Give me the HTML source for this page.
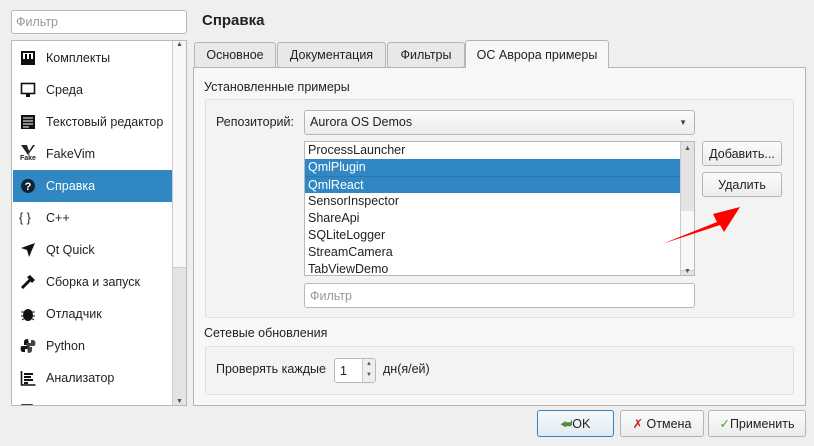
<!DOCTYPE html>
<html><head><meta charset="utf-8"><style>
*{box-sizing:border-box}
body{margin:0;width:814px;height:446px;background:#efefef;font-family:"Liberation Sans","DejaVu Sans",sans-serif;font-size:12.5px;color:#222;position:relative;overflow:hidden}
.a{position:absolute}
.inp{background:#fff;border:1px solid #b9b9b9;border-radius:3px}
.btn{background:linear-gradient(#fbfbfb,#ececec);border:1px solid #b5b5b5;border-radius:3px;text-align:center}
.item{position:absolute;left:1px;width:161px;height:32px;line-height:32px;padding-left:33px}
.row{height:17px;line-height:17px;padding-left:3px}
.sel{background:#3087c4;color:#fff}
</style></head><body>
<div class="a inp" style="left:11px;top:10px;width:176px;height:24px;padding:4px 4px;color:#999">Фильтр</div>
<div class="a" style="left:11px;top:40px;width:176px;height:366px;background:#fff;border:1px solid #b9b9b9;overflow:hidden">
 <div class="item" style="top:1px"><svg class="a" style="left:7px;top:8px" width="16" height="16"><rect x="1" y="1" width="14" height="14" fill="#111"/><rect x="3" y="3" width="10" height="6" fill="#fff"/><rect x="5" y="4" width="2" height="5"/><rect x="9" y="4" width="2" height="5"/></svg>Комплекты</div>
 <div class="item" style="top:33px"><svg class="a" style="left:7px;top:8px" width="16" height="16"><rect x="1.5" y="1.5" width="13" height="10" fill="none" stroke="#111" stroke-width="1.6"/><rect x="6" y="12" width="4" height="3" fill="#111"/></svg>Среда</div>
 <div class="item" style="top:65px"><svg class="a" style="left:7px;top:8px" width="16" height="16"><rect x="1" y="1" width="14" height="14" fill="#111"/><path d="M3 4h10M3 7h10M3 10h10M3 13h6" stroke="#fff"/></svg>Текстовый редактор</div>
 <div class="item" style="top:97px"><span class="a" style="left:7px;top:5px;font-size:7px;font-weight:bold">Fake</span><svg class="a" style="left:7px;top:6px" width="16" height="12"><path d="M1 1h6l2 6 4-6h2l-7 10z" fill="#222"/></svg>FakeVim</div>
 <div class="item sel" style="top:129px"><svg class="a" style="left:7px;top:8px" width="16" height="16"><circle cx="8" cy="8" r="7" fill="#123"/><text x="8" y="12" font-size="11" font-weight="bold" fill="#fff" text-anchor="middle" font-family="Liberation Sans">?</text></svg>Справка</div>
 <div class="item" style="top:161px"><span class="a" style="left:6px;top:0">{ }</span>C++</div>
 <div class="item" style="top:193px"><svg class="a" style="left:7px;top:8px" width="16" height="16"><path d="M15 1L1 6l6 2 2 7z" fill="#111"/></svg>Qt Quick</div>
 <div class="item" style="top:225px"><svg class="a" style="left:7px;top:8px" width="16" height="16"><path d="M2 14l8-8" stroke="#111" stroke-width="3"/><path d="M7 3l3-2 5 5-3 3z" fill="#111"/></svg>Сборка и запуск</div>
 <div class="item" style="top:257px"><svg class="a" style="left:7px;top:8px" width="16" height="16"><ellipse cx="8" cy="9" rx="5" ry="6" fill="#111"/><path d="M1 6h14M1 10h14M2 14l3-2M14 14l-3-2" stroke="#111"/></svg>Отладчик</div>
 <div class="item" style="top:289px"><svg class="a" style="left:7px;top:8px" width="16" height="16"><path d="M8 1C4 1 4 3 4 5v2h5v1H2c-2 0-2 6 1 6h2v-3h5" fill="#111"/><path d="M8 15c4 0 4-2 4-4V9H7V8h7c2 0 2-6-1-6h-2v3H6" fill="#444"/></svg>Python</div>
 <div class="item" style="top:321px"><svg class="a" style="left:7px;top:8px" width="16" height="16"><path d="M1.5 1v14h14" stroke="#111" stroke-width="1.6" fill="none"/><path d="M4 4h9M4 7h7M4 10h9M4 13h4" stroke="#111" stroke-width="2"/></svg>Анализатор</div>
 <div class="item" style="top:353px"><svg class="a" style="left:7px;top:8px" width="16" height="16"><rect x="2" y="3" width="10" height="10" fill="none" stroke="#111" stroke-width="1.6"/></svg></div>
 <div class="a" style="right:0;top:0;width:14px;height:364px;background:#e3e3e3;border-left:1px solid #ccc">
  <div style="height:227px;background:#f8f8f8;border-bottom:1px solid #ccc;font-size:7px;text-align:center;color:#555">▲</div>
  <div class="a" style="bottom:0;width:13px;text-align:center;font-size:7px;color:#555">▼</div>
 </div>
</div>

<div class="a" style="left:202px;top:12px;font-size:15px;font-weight:bold">Справка</div>
<div class="a" style="left:193px;top:67px;width:613px;height:339px;background:#f7f7f7;border:1px solid #b5b5b5"></div>
<div class="a btn" style="left:194px;top:42px;width:82px;height:26px;line-height:25px;background:#e8e8e8">Основное</div>
<div class="a btn" style="left:277px;top:42px;width:109px;height:26px;line-height:25px;background:#e8e8e8">Документация</div>
<div class="a btn" style="left:387px;top:42px;width:78px;height:26px;line-height:25px;background:#e8e8e8">Фильтры</div>
<div class="a" style="left:465px;top:40px;width:144px;height:28px;line-height:28px;background:#f7f7f7;border:1px solid #b5b5b5;border-bottom:none;border-radius:3px 3px 0 0;text-align:center">ОС Аврора примеры</div>

<div class="a" style="left:204px;top:80px">Установленные примеры</div>
<div class="a" style="left:205px;top:99px;width:589px;height:219px;background:#f3f3f3;border:1px solid #e0e0e0;border-radius:3px"></div>
<div class="a" style="left:216px;top:115px">Репозиторий:</div>
<div class="a btn" style="left:304px;top:110px;width:391px;height:25px;line-height:23px;text-align:left;padding-left:5px">Aurora OS Demos<span class="a" style="right:7px;top:0;font-size:8px;color:#444">▼</span></div>
<div class="a" style="left:304px;top:141px;width:391px;height:135px;background:#fff;border:1px solid #b9b9b9">
 <div class="row">ProcessLauncher</div>
 <div class="row sel" style="width:376px">QmlPlugin</div>
 <div class="row sel" style="width:376px;border-top:1px solid #2a78b0">QmlReact</div>
 <div class="row">SensorInspector</div>
 <div class="row">ShareApi</div>
 <div class="row">SQLiteLogger</div>
 <div class="row">StreamCamera</div>
 <div class="row">TabViewDemo</div>
 <div class="a" style="right:0;top:0;width:14px;height:133px;background:#e3e3e3;border-left:1px solid #ccc">
  <div style="height:17px;font-size:7px;text-align:center;color:#555;line-height:14px">▲</div>
  <div style="height:60px;background:#f8f8f8;border-bottom:1px solid #ccc;margin-top:52px"></div>
  <div class="a" style="bottom:0;width:13px;text-align:center;font-size:7px;color:#555">▼</div>
 </div>
</div>
<div class="a btn" style="left:702px;top:141px;width:80px;height:25px;line-height:24px">Добавить...</div>
<div class="a btn" style="left:702px;top:172px;width:80px;height:25px;line-height:24px">Удалить</div>
<svg class="a" style="left:655px;top:200px" width="90" height="50"><path d="M7 44L62 22l-4-8 27-7-16 25-4-7z" fill="#f00"/></svg>
<div class="a inp" style="left:304px;top:283px;width:391px;height:25px;padding:5px 5px;color:#999">Фильтр</div>

<div class="a" style="left:204px;top:326px">Сетевые обновления</div>
<div class="a" style="left:205px;top:346px;width:589px;height:49px;background:#f3f3f3;border:1px solid #e0e0e0;border-radius:3px"></div>
<div class="a" style="left:216px;top:362px">Проверять каждые</div>
<div class="a inp" style="left:334px;top:358px;width:42px;height:25px;padding:5px 5px">1<span class="a" style="right:0;top:0;width:13px;height:23px;border-left:1px solid #ccc;background:#eee;font-size:6px;line-height:11px;text-align:center;color:#555">▲<br>▼</span></div>
<div class="a" style="left:383px;top:362px">дн(я/ей)</div>

<div class="a btn" style="left:537px;top:410px;width:77px;height:27px;line-height:26px;border-color:#3d7fb4;background:linear-gradient(#f4f8fb,#e2ebf2)"><span style="color:#5a8a3a;font-weight:bold">⮨</span>OK</div>
<div class="a btn" style="left:620px;top:410px;width:84px;height:27px;line-height:26px"><span style="color:#c22;font-weight:bold">✗</span> Отмена</div>
<div class="a btn" style="left:708px;top:410px;width:98px;height:27px;line-height:26px"><span style="color:#4a9a3a;font-weight:bold">✓</span>Применить</div>
</body></html>
